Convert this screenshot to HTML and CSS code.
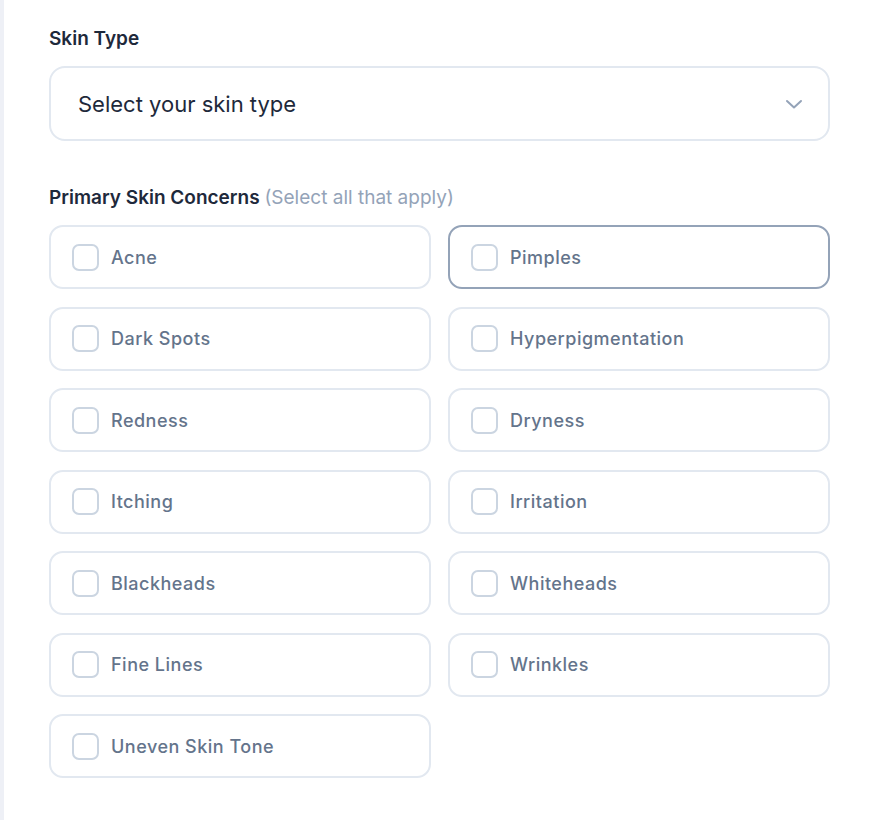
FILE: index.html
```html
<!DOCTYPE html>
<html lang="en">
<head>
    <meta charset="UTF-8">
    <meta name="viewport" content="width=device-width, initial-scale=1.0">
    <title>Skin profile</title>
    <link rel="stylesheet" href="styles.css">
</head>
<body>
    <div class="page">
        <div class="field">
            <label class="field-label" for="skin-type">Skin Type</label>
            <div class="select">
                <span class="select-text">Select your skin type</span>
                <svg class="chevron" width="18" height="10" viewBox="0 0 18 10" fill="none" stroke="currentColor" stroke-width="2" stroke-linecap="round" stroke-linejoin="round">
                    <path d="M2 2l7 6.5 7-6.5"/>
                </svg>
            </div>
        </div>

        <div class="field concerns">
            <div class="field-label">Primary Skin Concerns <span class="hint">(Select all that apply)</span></div>
            <div class="options">
                <label class="option"><span class="box"></span>Acne</label>
                <label class="option hover"><span class="box"></span>Pimples</label>
                <label class="option"><span class="box"></span>Dark Spots</label>
                <label class="option"><span class="box"></span>Hyperpigmentation</label>
                <label class="option"><span class="box"></span>Redness</label>
                <label class="option"><span class="box"></span>Dryness</label>
                <label class="option"><span class="box"></span>Itching</label>
                <label class="option"><span class="box"></span>Irritation</label>
                <label class="option"><span class="box"></span>Blackheads</label>
                <label class="option"><span class="box"></span>Whiteheads</label>
                <label class="option"><span class="box"></span>Fine Lines</label>
                <label class="option"><span class="box"></span>Wrinkles</label>
                <label class="option"><span class="box"></span>Uneven Skin Tone</label>
            </div>
        </div>
    </div>
</body>
</html>
```

FILE: styles.css
```css
body {
    margin: 0;
    background: #fff;
    font-family: Inter, "Noto Sans", sans-serif;
}

.page {
    min-height: 100vh;
    box-sizing: border-box;
    border-left: 4px solid #eef0f6;
    padding: 27px 42px 0 45px;
}

.field-label {
    display: block;
    font-size: 19px;
    line-height: 24px;
    font-weight: 600;
    color: #1e293b;
    margin-bottom: 15px;
}

.hint {
    font-weight: 400;
    color: #94a3b8;
}

.select {
    display: flex;
    align-items: center;
    justify-content: space-between;
    height: 75px;
    box-sizing: border-box;
    border: 2px solid #e2e8f0;
    border-radius: 16px;
    padding: 0 25px 0 27px;
}

.select-text {
    font-size: 22px;
    color: #1e293b;
}

.chevron {
    color: #94a3b8;
}

.concerns {
    margin-top: 45px;
}

.concerns .field-label {
    margin-bottom: 15px;
}

.options {
    display: grid;
    grid-template-columns: 1fr 1fr;
    column-gap: 17px;
    row-gap: 17.5px;
}

.option {
    display: flex;
    align-items: center;
    gap: 12px;
    height: 64px;
    box-sizing: border-box;
    border: 2px solid #e2e8f0;
    border-radius: 14px;
    padding: 0 21px;
    font-size: 18px;
    letter-spacing: 0.5px;
    font-weight: 500;
    color: #64748b;
    cursor: pointer;
}

.option.hover {
    border-color: #94a3b8;
}

.box {
    width: 27px;
    height: 27px;
    box-sizing: border-box;
    border: 2px solid #cbd5e1;
    border-radius: 7px;
    flex-shrink: 0;
}
```
